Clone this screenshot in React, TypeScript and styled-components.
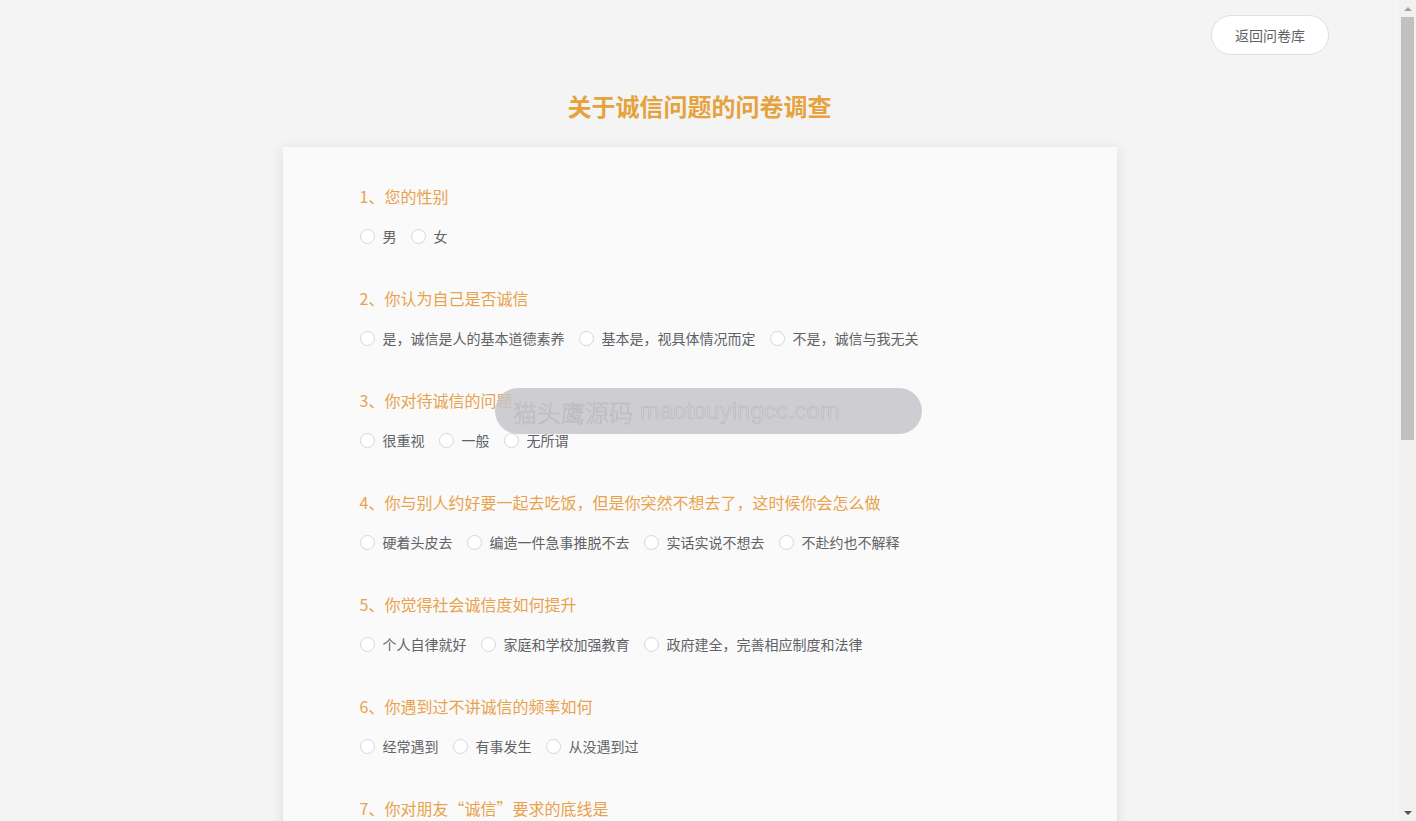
import React from "react";
import styled, { createGlobalStyle } from "styled-components";

const GlobalStyle = createGlobalStyle`
  html, body {
    margin: 0;
    padding: 0;
    background: #f4f4f5;
    font-family: "Noto Sans CJK SC", "Noto Sans", "Liberation Sans", sans-serif;
  }
  * {
    box-sizing: border-box;
  }
`;

const Page = styled.div`
  width: calc(100vw - 17px);
  min-height: 100vh;
  padding-bottom: 60px;
`;

const Header = styled.div`
  display: flex;
  justify-content: flex-end;
  padding: 15px 70px 0 0;
`;

const BackButton = styled.button`
  height: 40px;
  padding: 0 23px;
  border: 1px solid #dcdfe6;
  border-radius: 20px;
  background: #fff;
  color: #606266;
  font-family: inherit;
  font-size: 14px;
  cursor: pointer;
`;

const Title = styled.h1`
  margin: 35px 0 25px;
  text-align: center;
  color: #e6a23c;
  font-size: 24px;
  line-height: 32px;
  font-weight: 700;
`;

const Card = styled.div`
  width: 834px;
  margin: 0 auto;
  padding: 37px 77px 50px;
  background: #fafafa;
  box-shadow: 0 2px 12px rgba(0, 0, 0, 0.1);
`;

const Question = styled.div`
  margin-bottom: 38px;
`;

const QuestionTitle = styled.div`
  color: #e9a24c;
  font-size: 16px;
  line-height: 24px;
  margin-bottom: 16px;
`;

const OptionRow = styled.div`
  display: flex;
  flex-wrap: wrap;
  align-items: center;
  column-gap: 14px;
  line-height: 24px;
`;

const Option = styled.label`
  display: inline-flex;
  align-items: center;
  gap: 8px;
  color: #606266;
  font-size: 14px;
  cursor: pointer;
`;

const Circle = styled.span`
  width: 15px;
  height: 15px;
  border-radius: 50%;
  border: 1px solid #d4d7de;
  background: #fff;
`;

const SubmitRow = styled.div`
  display: flex;
  justify-content: center;
  padding-top: 10px;
`;

const SubmitButton = styled.button`
  height: 40px;
  padding: 0 40px;
  border: 1px solid #e6a23c;
  border-radius: 4px;
  background: #e6a23c;
  color: #fff;
  font-family: inherit;
  font-size: 14px;
  cursor: pointer;
`;

const Watermark = styled.div`
  position: fixed;
  left: 495px;
  top: 388px;
  width: 427px;
  height: 46px;
  padding-left: 18px;
  display: flex;
  align-items: center;
  border-radius: 23px;
  background: rgba(196, 197, 201, 0.82);
  color: #cdced1;
  font-size: 24px;
  font-weight: 300;
  font-family: "Noto Sans CJK SC", "Liberation Sans", sans-serif;
  white-space: nowrap;
  pointer-events: none;
  -webkit-text-stroke: 0.5px #b4b5b9;
`;

const WatermarkLatin = styled.span`
  font-family: "Liberation Sans", sans-serif;
`;

const ScrollTrack = styled.div`
  position: fixed;
  top: 0;
  right: 0;
  width: 17px;
  height: 100vh;
  background: #f1f1f1;
  display: flex;
  flex-direction: column;
  align-items: center;
`;

const ScrollArrow = styled.div<{ $down?: boolean }>`
  width: 17px;
  height: 17px;
  display: flex;
  align-items: center;
  justify-content: center;
  &::before {
    content: "";
    border-left: 4px solid transparent;
    border-right: 4px solid transparent;
    ${(p) => (p.$down ? "border-top: 4px solid #505050;" : "border-bottom: 4px solid #a3a3a3;")}
  }
`;

const ScrollThumb = styled.div`
  width: 13px;
  height: 423px;
  background: #c1c1c1;
`;

const ScrollSpacer = styled.div`
  flex: 1;
`;

const questions: { title: string; options: string[] }[] = [
  { title: "1、您的性别", options: ["男", "女"] },
  {
    title: "2、你认为自己是否诚信",
    options: ["是，诚信是人的基本道德素养", "基本是，视具体情况而定", "不是，诚信与我无关"],
  },
  { title: "3、你对待诚信的问题", options: ["很重视", "一般", "无所谓"] },
  {
    title: "4、你与别人约好要一起去吃饭，但是你突然不想去了，这时候你会怎么做",
    options: ["硬着头皮去", "编造一件急事推脱不去", "实话实说不想去", "不赴约也不解释"],
  },
  {
    title: "5、你觉得社会诚信度如何提升",
    options: ["个人自律就好", "家庭和学校加强教育", "政府建全，完善相应制度和法律"],
  },
  { title: "6、你遇到过不讲诚信的频率如何", options: ["经常遇到", "有事发生", "从没遇到过"] },
  {
    title: "7、你对朋友“诚信”要求的底线是",
    options: ["绝对诚信", "善意的谎言可以接受", "无所谓"],
  },
  {
    title: "8、考试时你会作弊吗",
    options: ["从不作弊", "偶尔会", "经常会"],
  },
  {
    title: "9、你捡到别人的东西会怎么做",
    options: ["交给失主或相关部门", "看情况而定", "据为己有"],
  },
  {
    title: "10、你认为诚信在当今社会重要吗",
    options: ["非常重要", "比较重要", "不重要"],
  },
];

export default function App() {
  return (
    <Page>
      <GlobalStyle />
      <Header>
        <BackButton>返回问卷库</BackButton>
      </Header>
      <Title>关于诚信问题的问卷调查</Title>
      <Card>
        {questions.map((q) => (
          <Question key={q.title}>
            <QuestionTitle>{q.title}</QuestionTitle>
            <OptionRow>
              {q.options.map((o) => (
                <Option key={o}>
                  <Circle />
                  {o}
                </Option>
              ))}
            </OptionRow>
          </Question>
        ))}
        <SubmitRow>
          <SubmitButton>提交问卷</SubmitButton>
        </SubmitRow>
      </Card>
      <Watermark>
        猫头鹰源码<WatermarkLatin>&nbsp;maotouyingcc.com</WatermarkLatin>
      </Watermark>
      <ScrollTrack>
        <ScrollArrow />
        <ScrollThumb />
        <ScrollSpacer />
        <ScrollArrow $down />
      </ScrollTrack>
    </Page>
  );
}
